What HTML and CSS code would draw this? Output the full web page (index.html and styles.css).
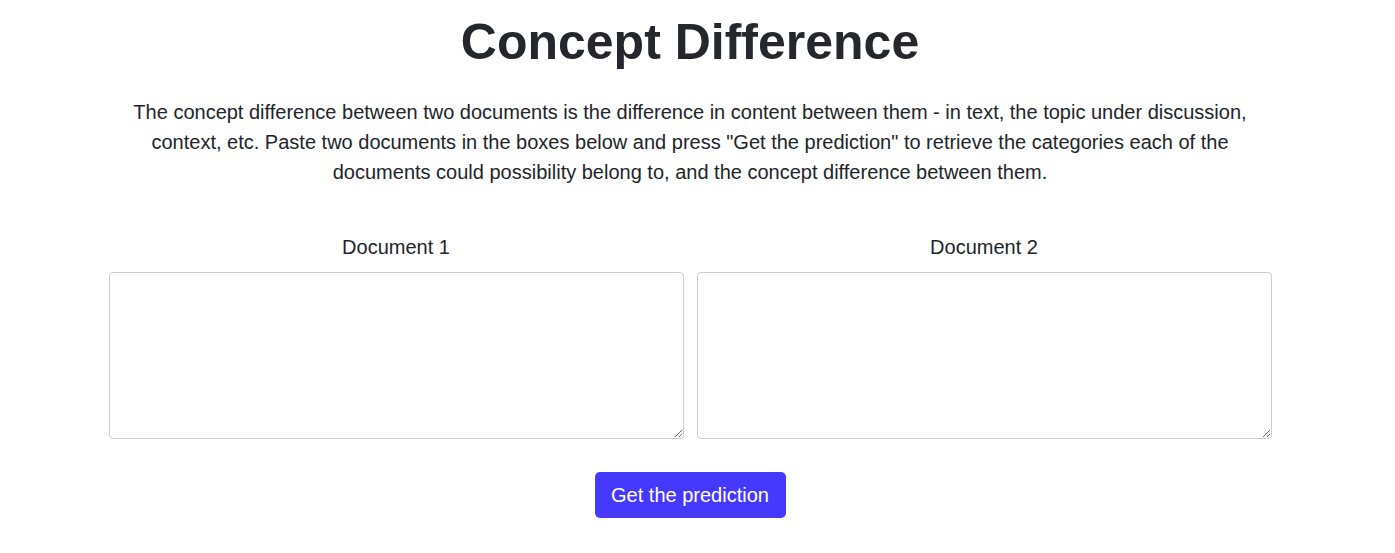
FILE: index.html
```html
<!DOCTYPE html>
<html lang="en">
<head>
<meta charset="utf-8">
<title>Concept Difference</title>
<link rel="stylesheet" href="styles.css">
</head>
<body>
<div class="page">
  <main class="container">
    <h1 class="title">Concept Difference</h1>
    <p class="lead">The concept difference between two documents is the difference in content between them - in text, the topic under discussion, context, etc. Paste two documents in the boxes below and press "Get the prediction" to retrieve the categories each of the documents could possibility belong to, and the concept difference between them.</p>
    <div class="docs">
      <div class="doc">
        <label class="doc-label" for="doc1">Document 1</label>
        <textarea id="doc1" class="doc-input"></textarea>
      </div>
      <div class="doc">
        <label class="doc-label" for="doc2">Document 2</label>
        <textarea id="doc2" class="doc-input"></textarea>
      </div>
    </div>
    <div class="actions">
      <button class="btn" type="button">Get the prediction</button>
    </div>
  </main>
</div>
</body>
</html>
```
FILE: styles.css
```css
html, body {
  margin: 0;
  padding: 0;
  background: #ffffff;
}
body {
  font-family: "Liberation Sans", Arial, sans-serif;
  color: #212529;
}
.page {
  width: 1380px;
}
.container {
  width: 1163px;
  margin: 0 auto;
}
.title {
  margin: 0;
  padding-top: 12px;
  font-size: 50px;
  line-height: 60px;
  font-weight: 700;
  text-align: center;
  color: #24272b;
}
.lead {
  margin: 25px 0 0;
  font-size: 20px;
  line-height: 30px;
  text-align: center;
}
.docs {
  display: flex;
  gap: 13px;
  margin-top: 45px;
}
.doc {
  flex: 1;
  display: flex;
  flex-direction: column;
  align-items: stretch;
}
.doc-label {
  font-size: 20px;
  line-height: 30px;
  text-align: center;
  margin-bottom: 10px;
}
.doc-input {
  box-sizing: border-box;
  height: 167px;
  border: 1px solid #cdcdd9;
  border-radius: 4px;
  padding: 6px 12px;
  font-family: inherit;
  font-size: 16px;
  resize: vertical;
  margin: 0;
}
.actions {
  display: flex;
  justify-content: center;
  margin-top: 33px;
}
.btn {
  box-sizing: border-box;
  width: 191px;
  height: 46px;
  background: #4639ff;
  color: #ffffff;
  border: none;
  border-radius: 5px;
  font-family: inherit;
  font-size: 20px;
  line-height: 30px;
  padding: 8px 0;
  text-align: center;
  cursor: pointer;
}
```
